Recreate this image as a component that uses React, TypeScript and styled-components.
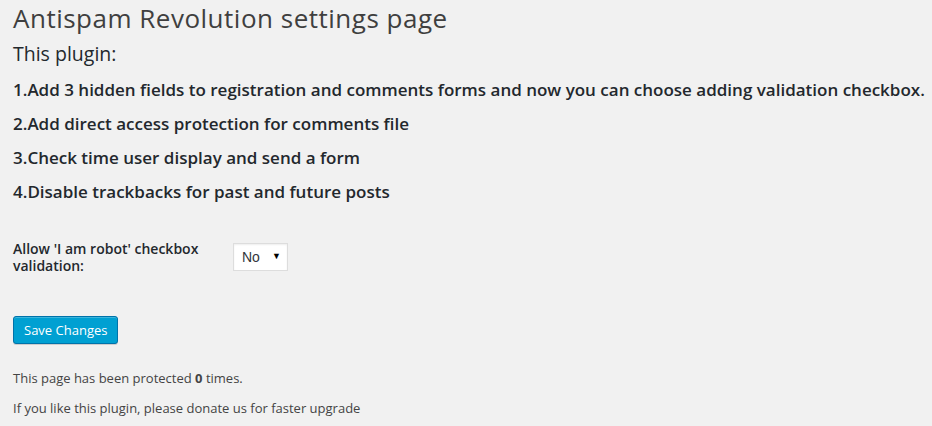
import React from "react";
import styled, { createGlobalStyle } from "styled-components";

const Global = createGlobalStyle`
  html, body { margin: 0; padding: 0; background: #f1f1f1; }
  body { font-family: "Open Sans", sans-serif; color: #444; }
`;

const Wrap = styled.div`
  padding: 3px 13px 0 13px;
  display: flex;
  flex-direction: column;
`;

const Title = styled.h1`
  margin: 0;
  font-size: 26px;
  line-height: 30px;
  font-weight: 400;
  letter-spacing: 0.5px;
  color: #3f3f3f;
`;

const Subtitle = styled.h2`
  margin: 8px 0 0 0;
  font-size: 19.5px;
  line-height: 26px;
  font-weight: 400;
  color: #23282d;
`;

const FeatureList = styled.div`
  margin-top: 11px;
  display: flex;
  flex-direction: column;
  gap: 10px;
`;

const Feature = styled.h3`
  margin: 0;
  font-size: 17px;
  line-height: 24px;
  font-weight: 600;
  color: #23282d;
  white-space: nowrap;
`;

const FormRow = styled.div`
  margin-top: 36px;
  display: grid;
  grid-template-columns: 220px auto;
  align-items: start;
`;

const Label = styled.label`
  font-size: 14px;
  line-height: 17px;
  font-weight: 600;
  color: #23282d;
  width: 200px;
`;

const SelectBox = styled.div`
  margin-top: 3px;
  width: 55px;
  height: 28px;
  box-sizing: border-box;
  background: #fff;
  border: 1px solid #ddd;
  box-shadow: inset 0 1px 2px rgba(0, 0, 0, 0.07);
  display: flex;
  align-items: center;
  justify-content: space-between;
  padding: 0 6px 0 8px;
  font-family: "Liberation Sans", Arial, sans-serif;
  font-size: 14px;
  color: #32373c;
`;

const Arrow = styled.span`
  font-size: 9px;
  color: #000;
  margin-top: -2px;
`;

const SaveButton = styled.button`
  margin-top: 42px;
  align-self: flex-start;
  height: 28px;
  box-sizing: border-box;
  padding: 0 10px 1px;
  background: #00a0d2;
  border: 1px solid #0073aa;
  border-radius: 3px;
  box-shadow: inset 0 1px 0 rgba(120, 200, 230, 0.5), 0 1px 0 rgba(0, 0, 0, 0.15);
  color: #fff;
  font-family: "Open Sans", sans-serif;
  font-size: 13px;
  line-height: 26px;
  white-space: nowrap;
  cursor: pointer;
`;

const Footer = styled.p<{ $top: number }>`
  margin: ${(p) => p.$top}px 0 0 0;
  font-size: 13px;
  line-height: 20px;
  color: #444;
`;

export default function App() {
  const features = [
    "1.Add 3 hidden fields to registration and comments forms and now you can choose adding validation checkbox.",
    "2.Add direct access protection for comments file",
    "3.Check time user display and send a form",
    "4.Disable trackbacks for past and future posts",
  ];
  return (
    <>
      <Global />
      <Wrap>
        <Title>Antispam Revolution settings page</Title>
        <Subtitle>This plugin:</Subtitle>
        <FeatureList>
          {features.map((f) => (
            <Feature key={f}>{f}</Feature>
          ))}
        </FeatureList>
        <FormRow>
          <Label>Allow 'I am robot' checkbox validation:</Label>
          <SelectBox>
            <span>No</span>
            <Arrow>▼</Arrow>
          </SelectBox>
        </FormRow>
        <SaveButton>Save Changes</SaveButton>
        <Footer $top={24}>
          This page has been protected <b>0</b> times.
        </Footer>
        <Footer $top={10}>If you like this plugin, please donate us for faster upgrade</Footer>
      </Wrap>
    </>
  );
}
